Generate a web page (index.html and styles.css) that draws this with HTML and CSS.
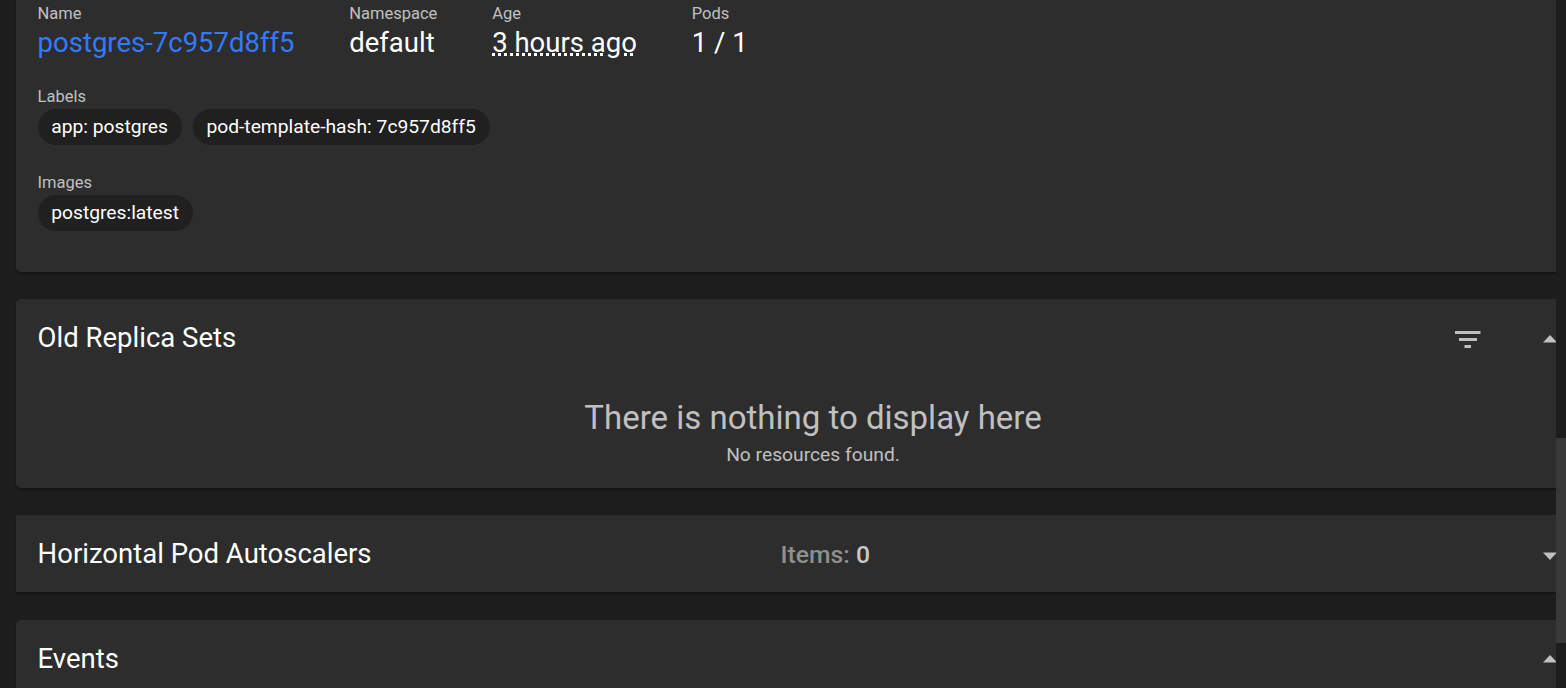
FILE: index.html
```html
<!DOCTYPE html>
<html lang="en">
<head>
<meta charset="utf-8">
<title>Replica Sets</title>
<link rel="stylesheet" href="styles.css">
</head>
<body>
<div class="viewport">
<main class="content">
  <section class="card details">
    <div class="row">
      <div class="prop name"><span class="key">Name</span><a class="value link">postgres-7c957d8ff5</a></div>
      <div class="prop namespace"><span class="key">Namespace</span><span class="value">default</span></div>
      <div class="prop age"><span class="key">Age</span><span class="value dotted">3 hours ago</span></div>
      <div class="prop"><span class="key">Pods</span><span class="value">1 / 1</span></div>
    </div>
    <div class="group labels"><span class="key">Labels</span>
      <div class="chips"><span class="chip chip-app">app: postgres</span><span class="chip chip-hash">pod-template-hash: 7c957d8ff5</span></div>
    </div>
    <div class="group"><span class="key">Images</span>
      <div class="chips"><span class="chip chip-image">postgres:latest</span></div>
    </div>
  </section>
  <section class="card old">
    <header class="head"><h2>Old Replica Sets</h2>
      <svg class="filter" viewBox="0 0 26 18"><path d="M0 0h25.5v3H0zM4 7h18v3H4zM9.5 14h6.5v3H9.5z"/></svg>
      <svg class="caret" viewBox="0 0 14 8"><path d="M0 7.4l7-7.4 7 7.4z"/></svg>
    </header>
    <div class="empty"><p class="empty-title">There is nothing to display here</p><p class="empty-text">No resources found.</p></div>
  </section>
  <section class="card hpa">
    <header class="head"><h2>Horizontal Pod Autoscalers</h2>
      <span class="items">Items: <b>0</b></span>
      <svg class="caret" viewBox="0 0 14 8"><path d="M0 .5l7 7.4 7-7.4z"/></svg>
    </header>
  </section>
  <section class="card events">
    <header class="head"><h2>Events</h2>
      <svg class="caret" viewBox="0 0 14 8"><path d="M0 7.4l7-7.4 7 7.4z"/></svg>
    </header>
  </section>
</main>
<div class="scrollbar"><div class="thumb"></div></div>
</div>
</body>
</html>
```
FILE: styles.css
```css
* { box-sizing: border-box; }
body { margin: 0; background: #1d1d1d; color: #fff; font-family: Roboto, sans-serif; }
h2, p { margin: 0; font-weight: 400; }
.viewport { display: flex; height: 688px; overflow: hidden; }
.content { width: 1556px; padding-left: 16px; overflow: hidden; }
.scrollbar { width: 10px; padding-top: 438px; background: #1d1d1d; }
.thumb { height: 205px; background: #383838; }
.card { background: #2d2d2d; border-radius: 5px 0 0 5px; box-shadow: 0 2px 2px rgba(0, 0, 0, .35); margin-bottom: 27px; }
.details { height: 272px; padding: 4px 22px 0 21.6px; border-top-left-radius: 0; }
.row { display: flex; height: 83px; }
.name { width: 311.6px; }
.namespace { width: 143px; }
.age { width: 199.6px; }
.key { display: block; font-size: 16.5px; line-height: 20px; color: #c0c0c0; }
.value { display: inline-block; font-size: 27.5px; line-height: 32px; margin-top: 3px; white-space: nowrap; }
.link { color: #337aff; }
.dotted { text-decoration: underline dotted 3px; text-underline-offset: 1px; }
.group { height: 86px; }
.chips { display: flex; gap: 11px; margin-top: 2px; }
.chip { height: 36px; border-radius: 18px; background: #202020; font-size: 19.25px; line-height: 36px; text-align: center; white-space: nowrap; }
.chip-app { width: 144px; }
.chip-hash { width: 297px; }
.chip-image { width: 155px; }
.head { display: flex; align-items: center; height: 77px; padding-left: 21.6px; }
h2 { font-size: 27.5px; line-height: 36px; white-space: nowrap; }
.old { height: 189px; }
.filter { width: 26px; height: 18px; margin: 5px 62px 0 auto; fill: #c0c0c0; flex: none; }
.caret { width: 14px; height: 8px; margin: 3px -1px 0 auto; fill: #c0c0c0; flex: none; }
.filter + .caret { margin-left: 0; }
.empty { text-align: center; color: #c0c0c0; padding: 20px 0 0 54px; }
.empty-title { font-size: 33px; line-height: 44px; }
.empty-text { font-size: 19.25px; line-height: 30px; }
.hpa { height: 77px; margin-bottom: 28px; border-radius: 0; }
.items { margin: 2px 0 0 409px; font-size: 24.75px; font-weight: 500; color: #8f8f8f; }
.items b { font-weight: 500; color: #c8c8c8; }
.hpa .caret { margin-top: 5px; }
.events { height: 77px; }
.events .caret { margin-top: 1px; }
```
